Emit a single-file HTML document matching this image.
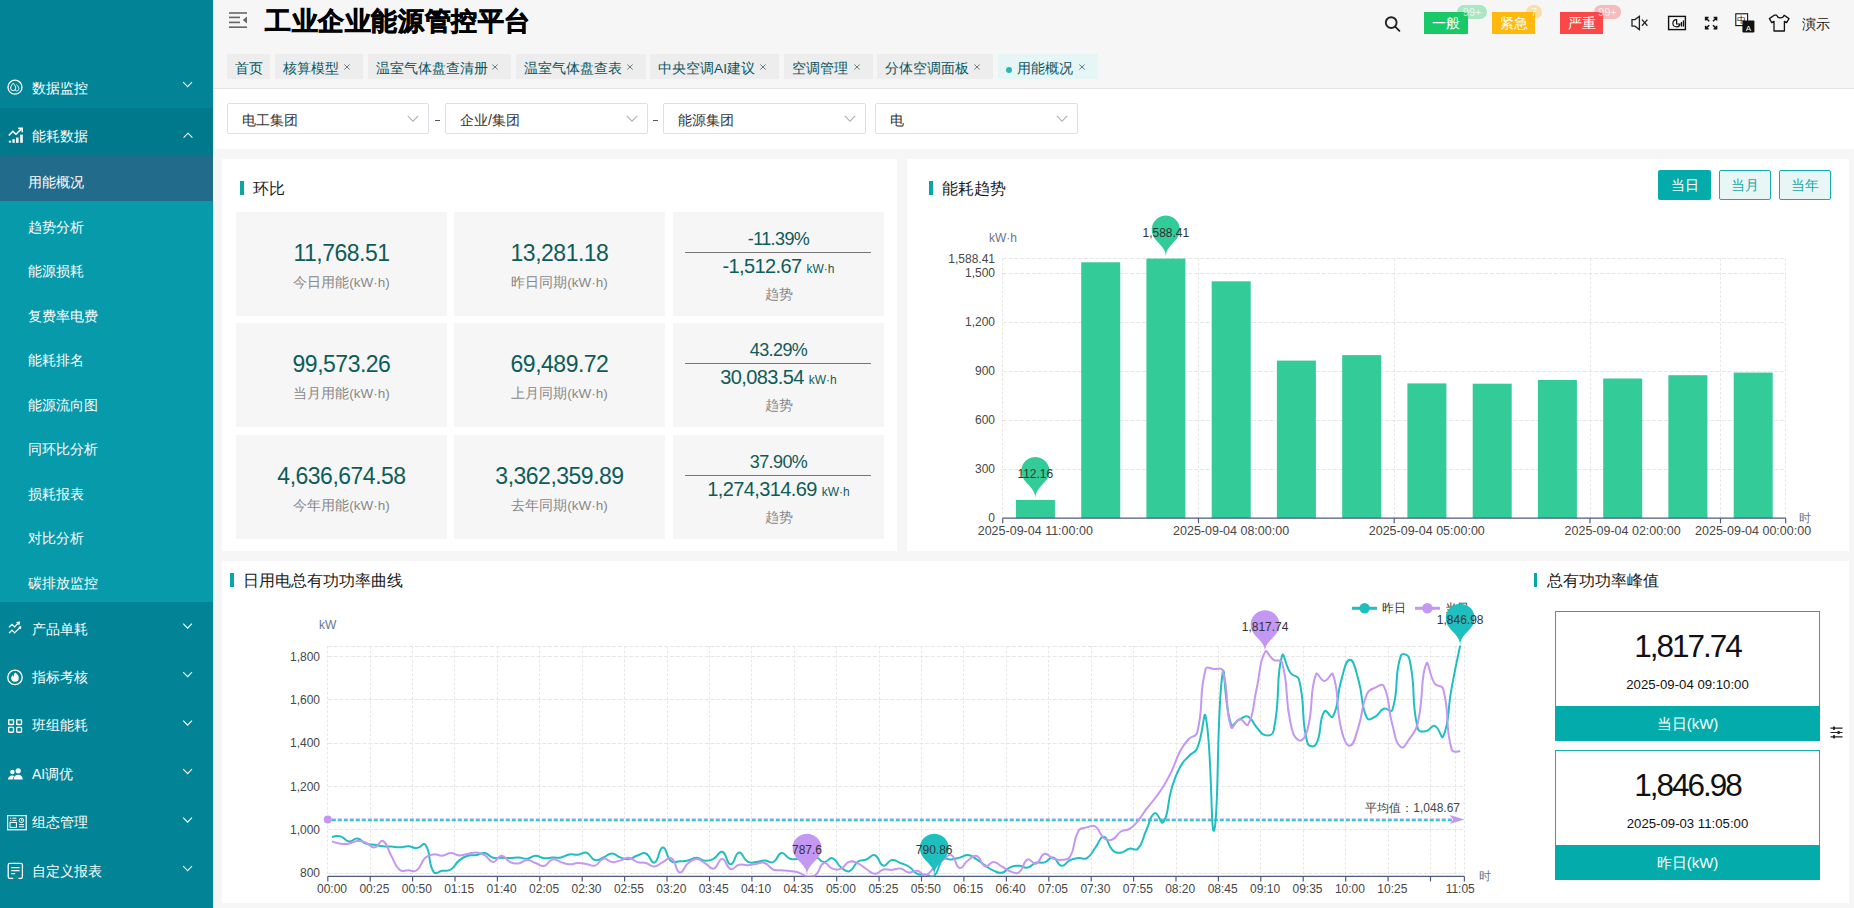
<!DOCTYPE html>
<html><head><meta charset="utf-8">
<style>
*{margin:0;padding:0;box-sizing:border-box}
html,body{width:1854px;height:908px;overflow:hidden;background:#f6f6f6;font-family:"Liberation Sans",sans-serif;}
.a{position:absolute}
#side{left:0;top:0;width:213px;height:908px;background:#028396}
.mi{position:absolute;left:0;width:213px;color:#fff;font-size:14px;}
.mi .t{position:absolute;left:32px;white-space:nowrap;line-height:16px}
.mi .ic{position:absolute;left:7px}
.mi .ch{position:absolute;left:181px}
.si{position:absolute;left:0;width:213px;color:#fff;font-size:14px;}
.si .t{position:absolute;left:28px;white-space:nowrap;line-height:16px}
#hdr{left:213px;top:0;width:1641px;height:89px;background:#f6f6f6;border-bottom:1px solid #e2e2e2}
.tab{position:absolute;top:54px;height:25px;background:#ededed;color:#0b5560;font-size:13.7px;white-space:nowrap}
.tab .t{position:absolute;left:8px;top:7px;line-height:16px}
.tab .x{position:absolute;top:6px;font-size:11px;color:#555}
#flt{left:213px;top:89px;width:1641px;height:60px;background:#fff}
.sel{position:absolute;top:103px;height:31px;width:202px;border:1px solid #dcdfe6;border-radius:2px;background:#fff;font-size:14px;color:#333}
.sel .t{position:absolute;left:14px;top:8px}
.card{position:absolute;background:#fff}
.ttl{position:absolute;font-size:16px;color:#1a1a1a;white-space:nowrap}
.bar{position:absolute;width:4px;height:14px;background:#0aa5a5}
.tile{position:absolute;width:211px;height:104px;background:#f6f6f6;text-align:center}
.num{color:#0e5c5a}
.n1{position:absolute;left:0;width:100%;top:28px;font-size:23px;line-height:26px;letter-spacing:-0.5px}
.lbl{position:absolute;left:0;width:100%;top:63px;font-size:13.5px;line-height:16px;color:#888}
.n2{position:absolute;left:0;width:100%;top:17px;font-size:18px;line-height:20px;letter-spacing:-0.6px}
.hl{position:absolute;left:12px;width:186px;top:40px;height:1px;background:#777}
.n3{position:absolute;left:0;width:100%;top:41.5px;font-size:20px;line-height:24px;letter-spacing:-0.6px}
.n3 .u{font-size:12px;letter-spacing:0}
.l2{top:74px;font-size:14px}
.pk{width:265px;height:130px;border:1px solid #19adad;background:#fff;text-align:center}
.pn{position:absolute;left:0;width:100%;top:17px;font-size:31.5px;line-height:34px;color:#111;letter-spacing:-2px}
.pd{position:absolute;left:0;width:100%;top:64px;font-size:13.2px;line-height:18px;color:#111}
.pb{position:absolute;left:-1px;width:265px;top:94px;height:35px;background:#03acaa;color:#fff;font-size:15px;line-height:35px}
</style></head>
<body>
<div id="side" class="a">
<div class="mi" style="top:60px;height:48px"><span class="t" style="top:20px">数据监控</span></div>
<div class="mi" style="top:108px;height:48px;background:#00798c"><span class="t" style="top:20px">能耗数据</span></div>
<div class="a" style="left:0;top:156px;width:213px;height:446px;background:#069aab"></div>
<div class="a" style="left:0;top:156px;width:213px;height:45px;background:#236b8b"></div>
<div class="si" style="top:174.0px"><span class="t">用能概况</span></div>
<div class="si" style="top:218.6px"><span class="t">趋势分析</span></div>
<div class="si" style="top:263.1px"><span class="t">能源损耗</span></div>
<div class="si" style="top:307.6px"><span class="t">复费率电费</span></div>
<div class="si" style="top:352.2px"><span class="t">能耗排名</span></div>
<div class="si" style="top:396.8px"><span class="t">能源流向图</span></div>
<div class="si" style="top:441.3px"><span class="t">同环比分析</span></div>
<div class="si" style="top:485.8px"><span class="t">损耗报表</span></div>
<div class="si" style="top:530.4px"><span class="t">对比分析</span></div>
<div class="si" style="top:575.0px"><span class="t">碳排放监控</span></div>
<div class="mi" style="top:620.5px"><span class="t">产品单耗</span></div>
<div class="mi" style="top:668.9px"><span class="t">指标考核</span></div>
<div class="mi" style="top:717.3px"><span class="t">班组能耗</span></div>
<div class="mi" style="top:765.7px"><span class="t">AI调优</span></div>
<div class="mi" style="top:814.1px"><span class="t">组态管理</span></div>
<div class="mi" style="top:862.5px"><span class="t">自定义报表</span></div>
</div>
<svg class="a" style="left:0;top:0" width="213" height="908" viewBox="0 0 213 908" fill="none" stroke="#fff" stroke-width="1.2">
<path d="M183.2 82.2L187.6 86.6L192 82.2" stroke-width="1.1"/>
<path d="M183.2 623.7L187.6 628.1L192 623.7" stroke-width="1.1"/>
<path d="M183.2 672.2L187.6 676.6L192 672.2" stroke-width="1.1"/>
<path d="M183.2 720.7L187.6 725.1L192 720.7" stroke-width="1.1"/>
<path d="M183.2 769.2L187.6 773.6L192 769.2" stroke-width="1.1"/>
<path d="M183.2 817.7L187.6 822.1L192 817.7" stroke-width="1.1"/>
<path d="M183.2 866.2L187.6 870.6L192 866.2" stroke-width="1.1"/>
<path d="M183.6 137.6L188 133.2L192.4 137.6" stroke-width="1.1"/>
<circle cx="15" cy="87.2" r="7" stroke-width="1.3"/>
<path d="M13.2 83.2c-1.6 2-2.6 3.4-2.6 4.8a2.6 2.6 0 0 0 5.2 0c0-1.4-1-2.8-2.6-4.8z" stroke-width="1"/><path d="M16.6 84.6c1.4 1.6 2.3 2.8 2.3 4a2.3 2.3 0 0 1-3.6 1.9" stroke-width="1"/>
<path d="M8.8 135.6L12.8 131.4L16 134.2L21.6 128.6" stroke-width="1.5"/><path d="M18.2 128.2H22.2V132.2" stroke-width="1.5"/>
<g fill="#fff" stroke="none"><circle cx="10" cy="141.6" r="1.2"/><rect x="12.4" y="139.2" width="2.4" height="3.6"/><rect x="16" y="137.6" width="2.6" height="5.2"/><rect x="20.2" y="134.6" width="2.6" height="8.2"/></g>
<path d="M9 627.2L12 624.4L14.6 627L18 623.4" stroke-width="1.2"/><path d="M9 633L12 630.2L14.6 632.8L19.6 627.8" stroke-width="1.2"/><path d="M16.4 622.6L19.6 621.8L19 625" fill="#fff" stroke-width="0.8"/><path d="M18.6 627.2L21 626.6L20.4 629.2" fill="#fff" stroke-width="0.8"/>
<circle cx="15" cy="677.4" r="7.2" stroke-width="1.3"/>
<path d="M15.2 672.6c2.6 2 3.6 3.6 3.6 5.4a3.8 3.8 0 0 1-7.6 0c0-1.2.6-2.2 1.4-3 .2 1 .6 1.6 1.2 1.8-.2-1.8.4-3.2 1.4-4.2z" fill="#fff" stroke="none"/>
<g stroke-width="1.4"><rect x="8.7" y="719.7" width="4.8" height="4.8" rx=".6"/><rect x="16.7" y="719.7" width="4.8" height="4.8" rx=".6"/><rect x="8.7" y="727.4" width="4.8" height="4.8" rx=".6"/><rect x="16.7" y="727.4" width="4.8" height="4.8" rx=".6"/></g>
<g fill="#fff" stroke="none"><circle cx="18.2" cy="770.8" r="2.6"/><path d="M13.6 779.6c0-3 2-4.8 4.6-4.8s4.6 1.8 4.6 4.8z"/><circle cx="12.4" cy="772" r="2.2"/><path d="M8 779.6c0-2.6 1.8-4.2 4.2-4.2 1 0 1.6.2 2.2.6-1 .9-1.6 2.1-1.6 3.6z"/></g>
<rect x="7.6" y="815.6" width="18.6" height="14.2" stroke-width="1.2"/>
<g stroke-width="1"><path d="M10 818.2h1.2M12.4 818.2h4M10 820.4h1.2M12.4 820.4h4"/><rect x="10" y="822.4" width="6.4" height="5"/><circle cx="21.4" cy="820.4" r="2.2"/><path d="M21.4 819.2v1.4h1M19 824.6h5M19 826.8h5"/></g>
<path d="M9.8 863.4h11a1.6 1.6 0 0 1 1.6 1.6v11.8a1.6 1.6 0 0 1-1.6 1.6h-2.4M13.2 878.4H9.8a1.6 1.6 0 0 1-1.6-1.6V865a1.6 1.6 0 0 1 1.6-1.6" stroke-width="1.3"/><path d="M11.2 867.6h8.4M11.2 870.6h8.4M11.2 873.6h4" stroke-width="1.3"/>
</svg>
<div id="hdr" class="a"></div>
<svg class="a" style="left:213px;top:0" width="1641" height="89" viewBox="213 0 1641 89"><g fill="#666"><rect x="229" y="12.2" width="18" height="1.6"/><rect x="229" y="16.6" width="11" height="1.6"/><rect x="229" y="21.6" width="11" height="1.6"/><rect x="229" y="26.4" width="18" height="1.6"/><path d="M247 16.4v7.2l-4.2-3.6z"/></g><g fill="none" stroke="#222" stroke-width="1.9"><circle cx="1391.2" cy="22.6" r="5.4"/><path d="M1395.2 26.6l4.2 4.2" stroke-linecap="round"/></g><g fill="none" stroke="#222" stroke-width="1.3"><path d="M1632 19.6h3l4.4-3.4v13.4l-4.4-3.4h-3z"/><path d="M1642 19.6l5.4 6.2M1647.4 19.6l-5.4 6.2"/></g><g fill="none" stroke="#111" stroke-width="1.4"><rect x="1668.6" y="16.4" width="16.8" height="13.2"/><path d="M1676.6 19.6a3.6 3.6 0 1 0 3.4 4.4h-3.4z" stroke-width="1.2"/></g><g fill="#111"><rect x="1680.8" y="22" width="1.3" height="4.6"/><rect x="1682.8" y="20.4" width="1.3" height="6.2"/></g><g fill="none" stroke="#111" stroke-width="1.5"><path d="M1705.6 20.6v-3h3M1716.6 20.6v-3h-3M1705.6 25.8v3h3M1716.6 25.8v3h-3M1706 18l3.2 3.2M1716.2 18l-3.2 3.2M1706 28.4l3.2-3.2M1716.2 28.4l-3.2-3.2"/></g><rect x="1735.8" y="13.8" width="11.8" height="11.8" fill="#fff" stroke="#111" stroke-width="1.1"/><text x="1741.7" y="23.4" font-size="9" text-anchor="middle" fill="#111" font-family="Liberation Sans,sans-serif">中</text><rect x="1742.4" y="20.4" width="12" height="12" fill="#111" rx="1"/><text x="1748.4" y="30.6" font-size="8" text-anchor="middle" fill="#fff" font-family="Liberation Sans,sans-serif">A</text><path d="M1774.2 15.2l-4.8 3.4 2.4 4 2.2-1.2v9.6h10.4v-9.6l2.2 1.2 2.4-4-4.8-3.4c-.6 1.6-2 2.6-3.8 2.6s-3.2-1-3.8-2.6z" fill="none" stroke="#111" stroke-width="1.3" stroke-linejoin="round"/></svg>
<div class="a" style="left:265px;top:4px;font-size:26px;font-weight:900;color:#000;-webkit-text-stroke:0.7px #000;white-space:nowrap;line-height:34px;letter-spacing:0.6px">工业企业能源管控平台</div>
<div class="a" style="left:1802px;top:14px;font-size:14px;color:#111;line-height:20px">演示</div>
<div class="a" style="left:1424px;top:12px;width:44px;height:22px;background:#19c968;color:#fff;font-size:14px;line-height:22px;text-align:center">一般</div><div class="a" style="left:1457.4px;top:5.4px;width:29.59999999999991px;height:14px;border-radius:7px;background:rgba(25,201,104,.35);color:rgba(255,255,255,.75);font-size:11px;line-height:14px;text-align:center">99+</div>
<div class="a" style="left:1492px;top:12px;width:43px;height:22px;background:#ffb80d;color:#fff;font-size:14px;line-height:22px;text-align:center">紧急</div><div class="a" style="left:1525.7px;top:5.4px;width:16.59999999999991px;height:14px;border-radius:7px;background:rgba(255,184,13,.35);color:rgba(255,255,255,.75);font-size:11px;line-height:14px;text-align:center">7</div>
<div class="a" style="left:1560px;top:12px;width:43px;height:22px;background:#fa4848;color:#fff;font-size:14px;line-height:22px;text-align:center">严重</div><div class="a" style="left:1593.8px;top:5.4px;width:27.200000000000045px;height:14px;border-radius:7px;background:rgba(250,72,72,.35);color:rgba(255,255,255,.75);font-size:11px;line-height:14px;text-align:center">99+</div>
<div class="tab" style="left:227px;width:43px;background:#ededed"><span class="t">首页</span></div>
<div class="tab" style="left:275px;width:88px;background:#ededed"><span class="t">核算模型</span><svg class="a" style="left:68.3px;top:9px" width="8" height="8" viewBox="0 0 8 8"><path d="M1.3 1.5L6.7 6.5M6.7 1.5L1.3 6.5" stroke="#5a7075" stroke-width="0.9"/></svg></div>
<div class="tab" style="left:368px;width:143px;background:#ededed"><span class="t">温室气体盘查清册</span><svg class="a" style="left:123.3px;top:9px" width="8" height="8" viewBox="0 0 8 8"><path d="M1.3 1.5L6.7 6.5M6.7 1.5L1.3 6.5" stroke="#5a7075" stroke-width="0.9"/></svg></div>
<div class="tab" style="left:516px;width:130px;background:#ededed"><span class="t">温室气体盘查表</span><svg class="a" style="left:110.3px;top:9px" width="8" height="8" viewBox="0 0 8 8"><path d="M1.3 1.5L6.7 6.5M6.7 1.5L1.3 6.5" stroke="#5a7075" stroke-width="0.9"/></svg></div>
<div class="tab" style="left:650px;width:129px;background:#ededed"><span class="t">中央空调AI建议</span><svg class="a" style="left:109.3px;top:9px" width="8" height="8" viewBox="0 0 8 8"><path d="M1.3 1.5L6.7 6.5M6.7 1.5L1.3 6.5" stroke="#5a7075" stroke-width="0.9"/></svg></div>
<div class="tab" style="left:784px;width:88.5px;background:#ededed"><span class="t">空调管理</span><svg class="a" style="left:68.8px;top:9px" width="8" height="8" viewBox="0 0 8 8"><path d="M1.3 1.5L6.7 6.5M6.7 1.5L1.3 6.5" stroke="#5a7075" stroke-width="0.9"/></svg></div>
<div class="tab" style="left:877px;width:116px;background:#ededed"><span class="t">分体空调面板</span><svg class="a" style="left:96.3px;top:9px" width="8" height="8" viewBox="0 0 8 8"><path d="M1.3 1.5L6.7 6.5M6.7 1.5L1.3 6.5" stroke="#5a7075" stroke-width="0.9"/></svg></div>
<div class="tab" style="left:998px;width:100px;background:#e6f6f6"><span class="a" style="left:8px;top:13px;width:6px;height:6px;border-radius:3px;background:#2fb5b5"></span><span class="t" style="left:19px">用能概况</span><svg class="a" style="left:80.3px;top:9px" width="8" height="8" viewBox="0 0 8 8"><path d="M1.3 1.5L6.7 6.5M6.7 1.5L1.3 6.5" stroke="#5a7075" stroke-width="0.9"/></svg></div>
<div id="flt" class="a"></div>
<div class="sel" style="left:227px;width:202px"><span class="t">电工集团</span><svg class="a" style="left:179px;top:11px" width="12" height="8" viewBox="0 0 12 8"><path d="M0.8 0.8L6 6.2L11.2 0.8" fill="none" stroke="#b0b0b0" stroke-width="1.1"/></svg></div>
<div class="sel" style="left:445px;width:203px"><span class="t">企业/集团</span><svg class="a" style="left:180px;top:11px" width="12" height="8" viewBox="0 0 12 8"><path d="M0.8 0.8L6 6.2L11.2 0.8" fill="none" stroke="#b0b0b0" stroke-width="1.1"/></svg></div>
<div class="sel" style="left:663px;width:203px"><span class="t">能源集团</span><svg class="a" style="left:180px;top:11px" width="12" height="8" viewBox="0 0 12 8"><path d="M0.8 0.8L6 6.2L11.2 0.8" fill="none" stroke="#b0b0b0" stroke-width="1.1"/></svg></div>
<div class="sel" style="left:875px;width:203px"><span class="t">电</span><svg class="a" style="left:180px;top:11px" width="12" height="8" viewBox="0 0 12 8"><path d="M0.8 0.8L6 6.2L11.2 0.8" fill="none" stroke="#b0b0b0" stroke-width="1.1"/></svg></div>
<div class="a" style="left:435px;top:119.6px;width:4.6px;height:1.1px;background:#555"></div>
<div class="a" style="left:653px;top:119.6px;width:4.6px;height:1.1px;background:#555"></div>
<div class="card" style="left:222px;top:159px;width:675px;height:392px"></div>
<div class="card" style="left:907px;top:159px;width:942px;height:392px"></div>
<div class="bar" style="left:240px;top:181px"></div><div class="ttl" style="left:253px;top:179px;line-height:20px">环比</div>
<div class="tile" style="left:236px;top:212px"><div class="num n1">11,768.51</div><div class="lbl">今日用能(kW·h)</div></div>
<div class="tile" style="left:454px;top:212px"><div class="num n1">13,281.18</div><div class="lbl">昨日同期(kW·h)</div></div>
<div class="tile" style="left:673px;top:212px"><div class="num n2">-11.39%</div><div class="hl"></div><div class="num n3">-1,512.67 <span class="u">kW·h</span></div><div class="lbl l2">趋势</div></div>
<div class="tile" style="left:236px;top:323px"><div class="num n1">99,573.26</div><div class="lbl">当月用能(kW·h)</div></div>
<div class="tile" style="left:454px;top:323px"><div class="num n1">69,489.72</div><div class="lbl">上月同期(kW·h)</div></div>
<div class="tile" style="left:673px;top:323px"><div class="num n2">43.29%</div><div class="hl"></div><div class="num n3">30,083.54 <span class="u">kW·h</span></div><div class="lbl l2">趋势</div></div>
<div class="tile" style="left:236px;top:435px"><div class="num n1">4,636,674.58</div><div class="lbl">今年用能(kW·h)</div></div>
<div class="tile" style="left:454px;top:435px"><div class="num n1">3,362,359.89</div><div class="lbl">去年同期(kW·h)</div></div>
<div class="tile" style="left:673px;top:435px"><div class="num n2">37.90%</div><div class="hl"></div><div class="num n3">1,274,314.69 <span class="u">kW·h</span></div><div class="lbl l2">趋势</div></div>
<div class="bar" style="left:929px;top:181px"></div><div class="ttl" style="left:942px;top:179px;line-height:20px">能耗趋势</div>
<div class="a" style="left:1658px;top:170px;width:53px;height:30px;background:#03acaa;border-radius:2px;color:#fff;font-size:14px;line-height:30px;text-align:center">当日</div>
<div class="a" style="left:1719px;top:170px;width:52px;height:30px;background:#e8f6f6;border:1px solid #14adad;border-radius:2px;color:#18a8a8;font-size:14px;line-height:28px;text-align:center">当月</div>
<div class="a" style="left:1779px;top:170px;width:52px;height:30px;background:#e8f6f6;border:1px solid #14adad;border-radius:2px;color:#18a8a8;font-size:14px;line-height:28px;text-align:center">当年</div>
<svg class="a" style="left:907px;top:159px" width="942" height="392" viewBox="907 159 942 392" font-family="Liberation Sans,sans-serif">
<path d="M1002.7 469.5H1785.7" stroke="#e6e6e6" stroke-width="1" stroke-dasharray="4 1.8"/>
<path d="M1002.7 420.5H1785.7" stroke="#e6e6e6" stroke-width="1" stroke-dasharray="4 1.8"/>
<path d="M1002.7 371.5H1785.7" stroke="#e6e6e6" stroke-width="1" stroke-dasharray="4 1.8"/>
<path d="M1002.7 322.5H1785.7" stroke="#e6e6e6" stroke-width="1" stroke-dasharray="4 1.8"/>
<path d="M1002.7 273.5H1785.7" stroke="#e6e6e6" stroke-width="1" stroke-dasharray="4 1.8"/>
<path d="M1002.7 258.5H1785.7" stroke="#e6e6e6" stroke-width="1" stroke-dasharray="4 1.8"/>
<path d="M1002.5 258.6V518.2" stroke="#e6e6e6" stroke-width="1" stroke-dasharray="2.6 2"/>
<path d="M1198.5 258.6V518.2" stroke="#e6e6e6" stroke-width="1" stroke-dasharray="2.6 2"/>
<path d="M1394.5 258.6V518.2" stroke="#e6e6e6" stroke-width="1" stroke-dasharray="2.6 2"/>
<path d="M1590.5 258.6V518.2" stroke="#e6e6e6" stroke-width="1" stroke-dasharray="2.6 2"/>
<path d="M1720.5 258.6V518.2" stroke="#e6e6e6" stroke-width="1" stroke-dasharray="2.6 2"/>
<path d="M1785.5 258.6V518.2" stroke="#e6e6e6" stroke-width="1" stroke-dasharray="2.6 2"/>
<rect x="1015.9" y="499.9" width="39" height="18.3" fill="#33cb98"/>
<rect x="1081.2" y="262.3" width="39" height="255.9" fill="#33cb98"/>
<rect x="1146.4" y="258.6" width="39" height="259.6" fill="#33cb98"/>
<rect x="1211.7" y="281.3" width="39" height="236.9" fill="#33cb98"/>
<rect x="1276.9" y="360.6" width="39" height="157.6" fill="#33cb98"/>
<rect x="1342.2" y="355.1" width="39" height="163.1" fill="#33cb98"/>
<rect x="1407.4" y="383.4" width="39" height="134.8" fill="#33cb98"/>
<rect x="1472.7" y="383.7" width="39" height="134.5" fill="#33cb98"/>
<rect x="1537.9" y="380.0" width="39" height="138.2" fill="#33cb98"/>
<rect x="1603.2" y="378.5" width="39" height="139.7" fill="#33cb98"/>
<rect x="1668.4" y="375.2" width="39" height="143.0" fill="#33cb98"/>
<rect x="1733.7" y="372.6" width="39" height="145.6" fill="#33cb98"/>
<path d="M1002.7 518.2H1785.7" stroke="#4e5a80" stroke-width="1.2"/>
<path d="M1002.7 518.2V523.2" stroke="#4e5a80" stroke-width="1.2"/>
<path d="M1198.5 518.2V523.2" stroke="#4e5a80" stroke-width="1.2"/>
<path d="M1394.2 518.2V523.2" stroke="#4e5a80" stroke-width="1.2"/>
<path d="M1590.0 518.2V523.2" stroke="#4e5a80" stroke-width="1.2"/>
<path d="M1720.5 518.2V523.2" stroke="#4e5a80" stroke-width="1.2"/>
<path d="M1785.7 518.2V523.2" stroke="#4e5a80" stroke-width="1.2"/>
<text x="995" y="522.4" font-size="12" fill="#464646" text-anchor="end">0</text>
<text x="995" y="473.4" font-size="12" fill="#464646" text-anchor="end">300</text>
<text x="995" y="424.3" font-size="12" fill="#464646" text-anchor="end">600</text>
<text x="995" y="375.3" font-size="12" fill="#464646" text-anchor="end">900</text>
<text x="995" y="326.3" font-size="12" fill="#464646" text-anchor="end">1,200</text>
<text x="995" y="277.2" font-size="12" fill="#464646" text-anchor="end">1,500</text>
<text x="995" y="262.8" font-size="12" fill="#464646" text-anchor="end">1,588.41</text>
<text x="989" y="242" font-size="12" fill="#6a7590">kW·h</text>
<text x="1799" y="521.5" font-size="12" fill="#6a7590">时</text>
<text x="1035.3" y="535" font-size="12.5" fill="#464646" text-anchor="middle">2025-09-04 11:00:00</text>
<text x="1231.1" y="535" font-size="12.5" fill="#464646" text-anchor="middle">2025-09-04 08:00:00</text>
<text x="1426.8" y="535" font-size="12.5" fill="#464646" text-anchor="middle">2025-09-04 05:00:00</text>
<text x="1622.6" y="535" font-size="12.5" fill="#464646" text-anchor="middle">2025-09-04 02:00:00</text>
<text x="1753.1" y="535" font-size="12.5" fill="#464646" text-anchor="middle">2025-09-04 00:00:00</text>
<path d="M1022.59 477.19A14.10 14.10 0 1 1 1048.06 477.19C1044.44 484.83 1035.33 488.13 1035.33 498.00C1035.33 488.13 1026.21 484.83 1022.59 477.19Z" fill="#33cb98"/><text x="1035.325" y="478" font-size="12" fill="#333" text-anchor="middle">112.16</text>
<path d="M1153.09 235.69A14.10 14.10 0 1 1 1178.56 235.69C1174.94 243.33 1165.83 246.63 1165.83 256.50C1165.83 246.63 1156.71 243.33 1153.09 235.69Z" fill="#33cb98"/><text x="1165.825" y="236.5" font-size="12" fill="#333" text-anchor="middle">1,588.41</text>
</svg>
<div class="card" style="left:222px;top:561px;width:1627px;height:342px"></div>
<div class="bar" style="left:230px;top:573px"></div><div class="ttl" style="left:243px;top:571px;line-height:20px;font-size:15.7px">日用电总有功功率曲线</div>
<div class="bar" style="left:1534px;top:573px;width:3px"></div><div class="ttl" style="left:1547px;top:571px;line-height:20px">总有功功率峰值</div>
<div class="a pk" style="left:1555px;top:611px"><div class="pn">1,817.74</div><div class="pd">2025-09-04 09:10:00</div><div class="pb">当日(kW)</div></div>
<div class="a pk" style="left:1555px;top:750px"><div class="pn">1,846.98</div><div class="pd">2025-09-03 11:05:00</div><div class="pb">昨日(kW)</div></div>
<svg class="a" style="left:1830px;top:726px" width="13" height="13" viewBox="0 0 13 13"><g stroke="#222" stroke-width="1.2"><path d="M0.5 2.2H12.5M0.5 6.5H12.5M0.5 10.8H12.5"/></g><g fill="#222"><rect x="3" y="0.6" width="2" height="3.2"/><rect x="7.6" y="4.9" width="2" height="3.2"/><rect x="3" y="9.2" width="2" height="3.2"/></g></svg>
<!--LINE--><svg class="a" style="left:222px;top:561px" width="1627" height="342" viewBox="222 561 1627 342" font-family="Liberation Sans,sans-serif">
<path d="M327.75 873.5H1464.4" stroke="#e6e6e6" stroke-width="1" stroke-dasharray="4 1.8"/>
<path d="M327.75 829.5H1464.4" stroke="#e6e6e6" stroke-width="1" stroke-dasharray="4 1.8"/>
<path d="M327.75 786.5H1464.4" stroke="#e6e6e6" stroke-width="1" stroke-dasharray="4 1.8"/>
<path d="M327.75 743.5H1464.4" stroke="#e6e6e6" stroke-width="1" stroke-dasharray="4 1.8"/>
<path d="M327.75 699.5H1464.4" stroke="#e6e6e6" stroke-width="1" stroke-dasharray="4 1.8"/>
<path d="M327.75 656.5H1464.4" stroke="#e6e6e6" stroke-width="1" stroke-dasharray="4 1.8"/>
<path d="M327.75 646.5H1464.4" stroke="#e6e6e6" stroke-width="1" stroke-dasharray="4 1.8"/>
<path d="M327.5 646.0V876.4" stroke="#e6e6e6" stroke-width="1" stroke-dasharray="2.6 2"/>
<path d="M370.5 646.0V876.4" stroke="#e6e6e6" stroke-width="1" stroke-dasharray="2.6 2"/>
<path d="M412.5 646.0V876.4" stroke="#e6e6e6" stroke-width="1" stroke-dasharray="2.6 2"/>
<path d="M454.5 646.0V876.4" stroke="#e6e6e6" stroke-width="1" stroke-dasharray="2.6 2"/>
<path d="M497.5 646.0V876.4" stroke="#e6e6e6" stroke-width="1" stroke-dasharray="2.6 2"/>
<path d="M539.5 646.0V876.4" stroke="#e6e6e6" stroke-width="1" stroke-dasharray="2.6 2"/>
<path d="M582.5 646.0V876.4" stroke="#e6e6e6" stroke-width="1" stroke-dasharray="2.6 2"/>
<path d="M624.5 646.0V876.4" stroke="#e6e6e6" stroke-width="1" stroke-dasharray="2.6 2"/>
<path d="M667.5 646.0V876.4" stroke="#e6e6e6" stroke-width="1" stroke-dasharray="2.6 2"/>
<path d="M709.5 646.0V876.4" stroke="#e6e6e6" stroke-width="1" stroke-dasharray="2.6 2"/>
<path d="M751.5 646.0V876.4" stroke="#e6e6e6" stroke-width="1" stroke-dasharray="2.6 2"/>
<path d="M794.5 646.0V876.4" stroke="#e6e6e6" stroke-width="1" stroke-dasharray="2.6 2"/>
<path d="M836.5 646.0V876.4" stroke="#e6e6e6" stroke-width="1" stroke-dasharray="2.6 2"/>
<path d="M879.5 646.0V876.4" stroke="#e6e6e6" stroke-width="1" stroke-dasharray="2.6 2"/>
<path d="M921.5 646.0V876.4" stroke="#e6e6e6" stroke-width="1" stroke-dasharray="2.6 2"/>
<path d="M963.5 646.0V876.4" stroke="#e6e6e6" stroke-width="1" stroke-dasharray="2.6 2"/>
<path d="M1006.5 646.0V876.4" stroke="#e6e6e6" stroke-width="1" stroke-dasharray="2.6 2"/>
<path d="M1048.5 646.0V876.4" stroke="#e6e6e6" stroke-width="1" stroke-dasharray="2.6 2"/>
<path d="M1091.5 646.0V876.4" stroke="#e6e6e6" stroke-width="1" stroke-dasharray="2.6 2"/>
<path d="M1133.5 646.0V876.4" stroke="#e6e6e6" stroke-width="1" stroke-dasharray="2.6 2"/>
<path d="M1176.5 646.0V876.4" stroke="#e6e6e6" stroke-width="1" stroke-dasharray="2.6 2"/>
<path d="M1218.5 646.0V876.4" stroke="#e6e6e6" stroke-width="1" stroke-dasharray="2.6 2"/>
<path d="M1260.5 646.0V876.4" stroke="#e6e6e6" stroke-width="1" stroke-dasharray="2.6 2"/>
<path d="M1303.5 646.0V876.4" stroke="#e6e6e6" stroke-width="1" stroke-dasharray="2.6 2"/>
<path d="M1345.5 646.0V876.4" stroke="#e6e6e6" stroke-width="1" stroke-dasharray="2.6 2"/>
<path d="M1388.5 646.0V876.4" stroke="#e6e6e6" stroke-width="1" stroke-dasharray="2.6 2"/>
<path d="M1430.5 646.0V876.4" stroke="#e6e6e6" stroke-width="1" stroke-dasharray="2.6 2"/>
<path d="M1464.5 646.0V876.4" stroke="#e6e6e6" stroke-width="1" stroke-dasharray="2.6 2"/>
<path d="M1455.5 646.0V876.4" stroke="#e6e6e6" stroke-width="1" stroke-dasharray="2.6 2"/>
<text x="320" y="877.3" font-size="12" fill="#464646" text-anchor="end">800</text>
<text x="320" y="834.0" font-size="12" fill="#464646" text-anchor="end">1,000</text>
<text x="320" y="790.6" font-size="12" fill="#464646" text-anchor="end">1,200</text>
<text x="320" y="747.3" font-size="12" fill="#464646" text-anchor="end">1,400</text>
<text x="320" y="703.9" font-size="12" fill="#464646" text-anchor="end">1,600</text>
<text x="320" y="660.6" font-size="12" fill="#464646" text-anchor="end">1,800</text>
<text x="319" y="628.5" font-size="12" fill="#6a7590">kW</text>
<text x="332.0" y="893" font-size="12" fill="#464646" text-anchor="middle">00:00</text>
<text x="374.4" y="893" font-size="12" fill="#464646" text-anchor="middle">00:25</text>
<text x="416.8" y="893" font-size="12" fill="#464646" text-anchor="middle">00:50</text>
<text x="459.2" y="893" font-size="12" fill="#464646" text-anchor="middle">01:15</text>
<text x="501.6" y="893" font-size="12" fill="#464646" text-anchor="middle">01:40</text>
<text x="544.1" y="893" font-size="12" fill="#464646" text-anchor="middle">02:05</text>
<text x="586.5" y="893" font-size="12" fill="#464646" text-anchor="middle">02:30</text>
<text x="628.9" y="893" font-size="12" fill="#464646" text-anchor="middle">02:55</text>
<text x="671.3" y="893" font-size="12" fill="#464646" text-anchor="middle">03:20</text>
<text x="713.7" y="893" font-size="12" fill="#464646" text-anchor="middle">03:45</text>
<text x="756.1" y="893" font-size="12" fill="#464646" text-anchor="middle">04:10</text>
<text x="798.5" y="893" font-size="12" fill="#464646" text-anchor="middle">04:35</text>
<text x="840.9" y="893" font-size="12" fill="#464646" text-anchor="middle">05:00</text>
<text x="883.4" y="893" font-size="12" fill="#464646" text-anchor="middle">05:25</text>
<text x="925.8" y="893" font-size="12" fill="#464646" text-anchor="middle">05:50</text>
<text x="968.2" y="893" font-size="12" fill="#464646" text-anchor="middle">06:15</text>
<text x="1010.6" y="893" font-size="12" fill="#464646" text-anchor="middle">06:40</text>
<text x="1053.0" y="893" font-size="12" fill="#464646" text-anchor="middle">07:05</text>
<text x="1095.4" y="893" font-size="12" fill="#464646" text-anchor="middle">07:30</text>
<text x="1137.8" y="893" font-size="12" fill="#464646" text-anchor="middle">07:55</text>
<text x="1180.2" y="893" font-size="12" fill="#464646" text-anchor="middle">08:20</text>
<text x="1222.7" y="893" font-size="12" fill="#464646" text-anchor="middle">08:45</text>
<text x="1265.1" y="893" font-size="12" fill="#464646" text-anchor="middle">09:10</text>
<text x="1307.5" y="893" font-size="12" fill="#464646" text-anchor="middle">09:35</text>
<text x="1349.9" y="893" font-size="12" fill="#464646" text-anchor="middle">10:00</text>
<text x="1392.3" y="893" font-size="12" fill="#464646" text-anchor="middle">10:25</text>
<text x="1460.2" y="893" font-size="12" fill="#464646" text-anchor="middle">11:05</text>
<text x="1479" y="880" font-size="12" fill="#6a7590">时</text>
<path d="M327.75 876.4H1464.4" stroke="#4e5a80" stroke-width="1.2"/>
<path d="M327.8 876.4V881.4" stroke="#4e5a80" stroke-width="1.2"/>
<path d="M370.2 876.4V881.4" stroke="#4e5a80" stroke-width="1.2"/>
<path d="M412.6 876.4V881.4" stroke="#4e5a80" stroke-width="1.2"/>
<path d="M455.0 876.4V881.4" stroke="#4e5a80" stroke-width="1.2"/>
<path d="M497.4 876.4V881.4" stroke="#4e5a80" stroke-width="1.2"/>
<path d="M539.8 876.4V881.4" stroke="#4e5a80" stroke-width="1.2"/>
<path d="M582.2 876.4V881.4" stroke="#4e5a80" stroke-width="1.2"/>
<path d="M624.6 876.4V881.4" stroke="#4e5a80" stroke-width="1.2"/>
<path d="M667.0 876.4V881.4" stroke="#4e5a80" stroke-width="1.2"/>
<path d="M709.5 876.4V881.4" stroke="#4e5a80" stroke-width="1.2"/>
<path d="M751.9 876.4V881.4" stroke="#4e5a80" stroke-width="1.2"/>
<path d="M794.3 876.4V881.4" stroke="#4e5a80" stroke-width="1.2"/>
<path d="M836.7 876.4V881.4" stroke="#4e5a80" stroke-width="1.2"/>
<path d="M879.1 876.4V881.4" stroke="#4e5a80" stroke-width="1.2"/>
<path d="M921.5 876.4V881.4" stroke="#4e5a80" stroke-width="1.2"/>
<path d="M963.9 876.4V881.4" stroke="#4e5a80" stroke-width="1.2"/>
<path d="M1006.4 876.4V881.4" stroke="#4e5a80" stroke-width="1.2"/>
<path d="M1048.8 876.4V881.4" stroke="#4e5a80" stroke-width="1.2"/>
<path d="M1091.2 876.4V881.4" stroke="#4e5a80" stroke-width="1.2"/>
<path d="M1133.6 876.4V881.4" stroke="#4e5a80" stroke-width="1.2"/>
<path d="M1176.0 876.4V881.4" stroke="#4e5a80" stroke-width="1.2"/>
<path d="M1218.4 876.4V881.4" stroke="#4e5a80" stroke-width="1.2"/>
<path d="M1260.8 876.4V881.4" stroke="#4e5a80" stroke-width="1.2"/>
<path d="M1303.2 876.4V881.4" stroke="#4e5a80" stroke-width="1.2"/>
<path d="M1345.7 876.4V881.4" stroke="#4e5a80" stroke-width="1.2"/>
<path d="M1388.1 876.4V881.4" stroke="#4e5a80" stroke-width="1.2"/>
<path d="M1430.5 876.4V881.4" stroke="#4e5a80" stroke-width="1.2"/>
<path d="M1464.4 876.4V881.4" stroke="#4e5a80" stroke-width="1.2"/>
<path d="M331.8 820.5H1454.4" stroke="#2cc4c8" stroke-width="1.6" stroke-dasharray="4 2"/>
<path d="M331.8 819.2H1454.4" stroke="#9a9ef0" stroke-width="1.5" stroke-dasharray="4 2"/>
<circle cx="327.8" cy="819.6" r="4" fill="#c397f2"/>
<path d="M1464.4 819.6L1449.4 815.1L1453.4 819.6L1449.4 824.1Z" fill="#c397f2"/>
<text x="1460" y="812" font-size="12" fill="#464646" text-anchor="end">平均值：1,048.67</text>
<path d="M1352 608.3H1377" stroke="#1fbfbf" stroke-width="3"/><circle cx="1364.6" cy="608.3" r="5.3" fill="#1fbfbf"/>
<text x="1381.5" y="612.2" font-size="12" fill="#333">昨日</text>
<path d="M1415 608.3H1440" stroke="#c397f2" stroke-width="3"/><circle cx="1427.4" cy="608.3" r="5.3" fill="#c397f2"/>
<text x="1444.5" y="612.2" font-size="12" fill="#333">当日</text>
<clipPath id="gclip"><rect x="327.75" y="616.0" width="1146.7" height="260.4"/></clipPath><g clip-path="url(#gclip)">
<path d="M331.99 837.10C331.99 837.10 336.54 835.40 340.47 836.40C345.02 837.55 344.51 840.82 348.96 841.40C352.99 841.92 353.40 838.08 357.44 838.60C361.89 839.18 361.38 841.97 365.92 843.60C369.86 845.02 370.18 844.05 374.40 844.70C378.66 845.35 378.61 845.72 382.89 846.20C387.10 846.67 387.13 846.33 391.37 846.60C395.61 846.88 395.62 847.40 399.85 847.30C404.10 847.20 404.13 846.00 408.33 846.20C412.61 846.40 412.68 848.47 416.82 848.10C421.16 847.72 423.25 841.80 425.30 844.70C431.73 853.80 427.25 862.06 433.78 872.10C435.73 875.11 438.02 871.45 442.26 870.80C446.50 870.15 447.28 871.62 450.75 869.50C455.77 866.42 454.46 864.28 459.23 860.40C462.94 857.38 463.19 857.11 467.71 855.70C471.67 854.46 472.01 855.77 476.19 855.10C480.49 854.42 480.67 852.36 484.68 853.00C489.15 853.71 488.62 856.52 493.16 857.80C497.11 858.92 497.40 857.75 501.64 857.80C505.88 857.85 505.89 858.10 510.12 858.00C514.37 857.90 514.38 857.23 518.61 857.40C522.87 857.58 522.95 859.11 527.09 858.70C531.43 858.26 531.29 855.83 535.57 855.70C539.78 855.58 539.73 857.72 544.05 858.20C548.21 858.67 548.29 857.80 552.54 857.60C556.77 857.40 556.90 858.18 561.02 857.40C565.38 856.58 565.14 855.07 569.50 854.40C573.62 853.77 573.80 855.19 577.98 854.80C582.28 854.39 582.74 851.66 586.47 852.80C591.22 854.26 590.23 858.72 594.95 860.00C598.71 861.02 599.30 858.98 603.43 857.40C607.78 855.73 607.67 853.50 611.91 853.50C616.15 853.50 615.99 855.95 620.40 857.40C624.48 858.75 624.77 859.56 628.88 859.10C633.25 858.61 633.00 856.94 637.36 855.50C641.48 854.14 642.35 852.04 645.84 853.50C650.83 855.59 650.78 863.85 654.33 862.60C659.26 860.85 658.43 847.84 662.81 847.50C666.91 847.19 665.72 856.77 671.29 861.30C674.21 863.67 675.54 861.52 679.77 861.30C684.03 861.07 684.10 861.26 688.26 860.40C692.58 859.51 692.53 857.70 696.74 857.80C701.01 857.90 700.92 860.57 705.22 860.80C709.40 861.02 709.94 860.70 713.70 858.70C718.42 856.20 718.62 850.62 722.19 851.80C727.11 853.42 726.33 864.10 730.67 864.30C734.82 864.50 734.59 853.30 739.15 852.60C743.08 852.00 742.59 858.88 747.63 861.70C751.07 863.63 751.91 862.42 756.12 862.10C760.40 861.77 760.36 860.40 764.60 860.40C768.84 860.40 769.59 863.60 773.08 862.10C778.07 859.95 776.91 854.03 781.56 853.10C785.39 852.33 785.42 857.07 790.05 858.70C793.91 860.07 794.29 858.90 798.53 859.10C802.77 859.30 802.86 860.01 807.01 859.50C811.34 858.96 811.49 856.39 815.49 857.00C819.97 857.69 819.61 861.79 823.98 862.10C828.09 862.39 828.82 857.09 832.46 858.20C837.30 859.69 836.10 863.59 840.94 867.30C844.58 870.09 845.84 872.38 849.42 871.20C854.32 869.58 852.88 865.17 857.91 861.70C861.36 859.32 862.32 861.06 866.39 859.50C870.80 857.81 871.35 853.94 874.87 855.20C879.84 856.99 878.53 864.23 883.35 865.60C887.01 866.63 887.34 860.69 891.84 860.00C895.82 859.39 896.12 861.39 900.32 863.00C904.60 864.64 904.98 864.07 908.80 866.50C913.46 869.47 912.47 871.47 917.28 873.80C920.95 875.57 921.53 874.23 925.77 874.70C930.01 875.18 931.55 878.12 934.25 875.70C940.03 870.52 936.94 865.07 942.73 859.50C945.42 856.92 947.02 859.87 951.21 859.40C955.50 858.92 955.50 858.66 959.70 857.60C963.98 856.51 964.09 854.67 968.18 855.10C972.57 855.57 972.61 856.94 976.66 859.40C981.09 862.09 980.81 862.54 985.14 865.40C989.29 868.14 989.11 868.66 993.63 870.60C997.59 872.31 998.19 873.51 1002.11 872.70C1006.67 871.76 1005.99 868.97 1010.59 867.10C1014.47 865.52 1014.85 865.68 1019.07 865.80C1023.34 865.93 1023.56 868.31 1027.56 867.60C1032.05 866.81 1031.51 864.19 1036.04 862.80C1039.99 861.59 1040.57 863.61 1044.52 862.40C1049.05 861.01 1049.17 856.83 1053.00 857.60C1057.65 858.53 1056.93 865.10 1061.49 865.80C1065.41 866.40 1065.41 862.27 1069.97 860.20C1073.89 858.42 1074.15 858.63 1078.45 858.10C1082.63 857.58 1083.67 860.14 1086.93 858.10C1092.15 854.84 1091.19 852.81 1095.42 847.50C1099.67 842.16 1099.95 836.22 1103.90 836.80C1108.43 837.47 1106.97 844.93 1112.38 850.00C1115.45 852.88 1116.73 853.02 1120.86 852.70C1125.22 852.37 1124.89 849.75 1129.35 848.70C1133.37 847.75 1135.33 851.42 1137.83 848.70C1143.82 842.17 1141.93 839.39 1146.31 830.20C1150.42 821.59 1149.67 815.49 1154.79 813.10C1158.15 811.54 1161.06 825.58 1163.28 822.30C1169.54 813.03 1166.61 804.86 1171.76 788.00C1175.09 777.11 1174.92 776.77 1180.24 766.80C1183.40 760.87 1184.15 761.19 1188.72 756.20C1192.63 751.94 1194.99 753.47 1197.21 748.30C1203.47 733.67 1203.79 707.44 1205.69 716.60C1212.27 748.39 1210.61 839.35 1214.17 830.20C1219.09 817.55 1216.28 712.69 1222.65 673.00C1224.77 659.84 1224.01 705.06 1231.14 724.50C1232.49 728.21 1235.14 721.38 1239.62 719.30C1243.62 717.43 1244.74 715.04 1248.10 716.60C1253.22 718.99 1252.01 722.21 1256.58 727.20C1260.49 731.46 1260.38 734.02 1265.07 735.10C1268.86 735.97 1272.61 735.47 1273.55 731.10C1281.10 695.87 1275.26 679.10 1282.03 655.90C1283.74 650.05 1285.09 665.42 1290.51 673.00C1293.57 677.27 1297.78 674.57 1299.00 679.60C1306.26 709.57 1300.00 714.44 1307.48 743.00C1308.48 746.84 1314.26 747.59 1315.96 744.40C1322.74 731.74 1317.88 722.05 1324.44 711.30C1326.36 708.15 1331.16 719.91 1332.93 716.60C1339.64 704.06 1336.00 697.72 1341.41 679.60C1344.48 669.32 1345.65 659.80 1349.89 659.80C1354.13 659.80 1355.37 669.30 1358.37 679.60C1363.85 698.35 1359.90 702.72 1366.86 717.90C1368.38 721.22 1371.73 718.56 1375.34 716.60C1380.21 713.96 1378.95 710.60 1383.82 708.70C1387.43 707.30 1391.15 713.58 1392.30 710.00C1399.64 687.18 1393.49 678.06 1400.79 655.90C1401.97 652.31 1408.32 654.44 1409.27 658.50C1416.80 690.74 1410.22 696.26 1417.75 728.50C1418.70 732.56 1422.24 731.71 1426.23 731.10C1430.72 730.41 1431.12 724.78 1434.72 725.90C1439.60 727.43 1441.38 740.50 1443.20 736.40C1449.86 721.35 1447.14 711.94 1451.68 687.60C1455.62 666.49 1460.16 645.50 1460.16 645.50" fill="none" stroke="#1fbfbf" stroke-width="2"/>
<path d="M331.99 841.40C331.99 841.40 336.15 843.24 340.47 843.80C344.63 844.34 344.81 844.28 348.96 843.60C353.29 842.88 353.14 841.23 357.44 841.00C361.63 840.78 361.93 841.17 365.92 842.70C370.41 844.42 370.36 847.91 374.40 847.50C378.84 847.06 379.65 839.36 382.89 841.00C388.13 843.66 386.99 848.63 391.37 856.10C395.47 863.08 394.29 865.24 399.85 869.90C402.77 872.34 404.09 870.20 408.33 870.30C412.57 870.40 413.77 872.55 416.82 870.30C422.25 866.30 420.01 862.75 425.30 857.80C428.50 854.80 429.41 854.94 433.78 854.40C437.89 853.89 438.09 856.02 442.26 855.70C446.58 855.37 446.49 853.18 450.75 853.10C454.97 853.03 454.94 855.20 459.23 855.40C463.43 855.60 463.47 854.63 467.71 853.90C471.95 853.18 472.03 852.18 476.19 852.50C480.51 852.83 480.87 853.05 484.68 855.20C489.35 857.85 488.86 861.97 493.16 862.10C497.34 862.22 497.40 855.70 501.64 855.70C505.88 855.70 505.43 859.97 510.12 862.10C513.91 863.82 514.50 863.91 518.61 863.40C522.98 862.86 522.81 860.10 527.09 860.00C531.30 859.90 531.33 861.50 535.57 863.00C539.81 864.50 540.18 866.80 544.05 866.00C548.66 865.05 547.90 860.57 552.54 859.50C556.38 858.62 556.75 860.89 561.02 862.10C565.23 863.29 565.22 864.07 569.50 864.30C573.70 864.52 573.73 863.10 577.98 863.00C582.21 862.90 582.25 863.25 586.47 863.90C590.74 864.55 591.20 866.75 594.95 865.60C599.68 864.15 598.81 859.65 603.43 858.70C607.29 857.90 607.56 861.66 611.91 862.10C616.04 862.51 616.21 861.46 620.40 860.40C624.69 859.31 624.78 857.39 628.88 857.80C633.27 858.24 632.89 860.73 637.36 862.10C641.37 863.33 641.76 861.94 645.84 863.00C650.24 864.14 650.17 866.72 654.33 866.50C658.65 866.27 658.52 864.20 662.81 862.10C667.00 860.05 668.24 856.33 671.29 858.20C676.72 861.53 674.97 871.14 679.77 872.50C683.45 873.54 683.36 866.87 688.26 863.00C691.84 860.17 692.54 859.00 696.74 859.10C701.02 859.20 701.08 861.08 705.22 863.40C709.56 865.83 709.98 869.54 713.70 868.60C718.47 867.39 717.99 859.00 722.19 859.10C726.48 859.20 725.76 867.38 730.67 869.00C734.25 870.18 734.67 865.70 739.15 864.70C743.15 863.80 743.41 865.40 747.63 865.20C751.90 865.00 751.86 864.45 756.12 863.90C760.34 863.35 760.83 861.76 764.60 863.00C769.32 864.56 768.36 867.47 773.08 869.50C776.84 871.12 777.32 869.92 781.56 870.30C785.80 870.67 785.83 870.45 790.05 871.00C794.31 871.55 794.46 871.20 798.53 872.50C802.94 873.90 802.59 875.72 807.01 876.40C811.07 877.02 812.38 877.56 815.49 875.10C820.86 870.86 818.95 864.93 823.98 863.00C827.43 861.68 827.83 867.07 832.46 868.60C836.32 869.87 837.24 870.11 840.94 868.60C845.72 866.66 844.69 863.15 849.42 861.70C853.17 860.55 854.01 861.72 857.91 863.40C862.49 865.37 862.06 866.35 866.39 869.00C870.54 871.55 870.58 873.67 874.87 873.80C879.06 873.92 878.87 870.53 883.35 869.50C887.36 868.58 887.62 870.12 891.84 869.90C896.10 869.67 896.26 867.98 900.32 868.60C904.74 869.28 904.40 871.93 908.80 872.50C912.88 873.03 913.24 870.18 917.28 870.80C921.73 871.48 921.93 875.89 925.77 875.10C930.41 874.14 929.91 871.09 934.25 867.30C938.39 863.69 938.28 863.50 942.73 860.30C946.76 857.40 947.89 853.59 951.21 855.10C956.37 857.44 954.84 866.54 959.70 868.00C963.32 869.09 963.53 863.51 968.18 860.20C972.01 857.46 973.14 854.64 976.66 855.90C981.63 857.69 980.18 864.51 985.14 866.30C988.66 867.56 989.43 861.90 993.63 862.00C997.91 862.10 997.88 864.33 1002.11 866.70C1006.36 869.08 1006.07 870.01 1010.59 871.50C1014.55 872.81 1016.06 874.45 1019.07 872.30C1024.54 868.40 1022.31 862.06 1027.56 859.40C1030.79 857.76 1032.46 864.88 1036.04 863.70C1040.94 862.08 1039.66 855.29 1044.52 853.80C1048.14 852.69 1048.50 856.91 1053.00 858.50C1056.99 859.91 1057.35 860.21 1061.49 859.80C1065.83 859.36 1067.86 860.39 1069.97 856.80C1076.35 845.94 1072.11 841.90 1078.45 830.90C1080.59 827.20 1082.54 828.54 1086.93 827.40C1091.02 826.34 1092.27 824.50 1095.42 826.50C1100.75 829.90 1098.58 834.12 1103.90 838.20C1107.06 840.62 1108.79 840.92 1112.38 839.50C1117.27 837.57 1116.05 834.51 1120.86 831.50C1124.53 829.21 1125.67 831.18 1129.35 828.90C1134.15 825.93 1134.08 825.38 1137.83 821.00C1142.56 815.48 1141.91 814.93 1146.31 809.10C1150.40 803.68 1150.71 803.92 1154.79 798.50C1159.19 792.67 1159.47 792.82 1163.28 786.60C1167.95 778.97 1167.91 778.89 1171.76 770.80C1176.39 761.09 1175.19 760.44 1180.24 751.00C1183.67 744.59 1183.84 744.43 1188.72 739.10C1192.32 735.18 1195.99 737.53 1197.21 732.50C1204.47 702.53 1198.20 697.09 1205.69 669.10C1206.68 665.39 1209.95 668.78 1214.17 669.10C1218.44 669.43 1221.55 666.62 1222.65 670.40C1230.03 695.67 1224.08 706.86 1231.14 727.20C1232.56 731.31 1235.05 720.03 1239.62 719.30C1243.54 718.68 1246.29 727.75 1248.10 724.50C1254.77 712.55 1252.42 706.72 1256.58 688.90C1260.90 670.42 1258.57 663.05 1265.07 651.90C1267.05 648.50 1268.75 656.80 1273.55 659.80C1277.23 662.10 1280.95 658.48 1282.03 662.50C1289.43 690.08 1284.07 693.42 1290.51 723.00C1292.55 732.37 1294.01 738.40 1299.00 740.40C1302.49 741.80 1305.83 736.24 1307.48 729.80C1314.31 703.19 1308.85 694.76 1315.96 674.30C1317.33 670.36 1320.20 681.00 1324.44 681.00C1328.68 681.00 1331.56 670.36 1332.93 674.30C1340.04 694.76 1334.99 702.77 1341.41 729.80C1343.47 738.47 1345.91 746.31 1349.89 745.70C1354.39 745.01 1355.20 736.83 1358.37 727.20C1363.68 711.08 1360.41 709.25 1366.86 694.20C1368.89 689.45 1370.63 689.82 1375.34 687.60C1379.11 685.82 1382.30 682.88 1383.82 686.20C1390.78 701.33 1387.04 705.65 1392.30 724.50C1395.53 736.05 1395.06 742.07 1400.79 747.00C1403.55 749.37 1405.95 743.76 1409.27 739.10C1414.43 731.86 1415.79 731.90 1417.75 723.20C1424.27 694.25 1419.99 678.37 1426.23 663.80C1428.47 658.57 1428.92 675.03 1434.72 683.60C1437.41 687.58 1442.01 684.27 1443.20 688.90C1450.49 717.27 1444.24 722.37 1451.68 749.60C1452.72 753.42 1460.16 751.00 1460.16 751.00" fill="none" stroke="#c397f2" stroke-width="2"/></g>
<path d="M794.00 854.24A14.40 14.40 0 1 1 820.02 854.24C816.32 862.05 807.01 865.42 807.01 875.50C807.01 865.42 797.70 862.05 794.00 854.24Z" fill="#c397f2"/><text x="807.0" y="854" font-size="12" fill="#333" text-anchor="middle">787.6</text>
<path d="M921.24 854.24A14.40 14.40 0 1 1 947.26 854.24C943.56 862.05 934.25 865.42 934.25 875.50C934.25 865.42 924.94 862.05 921.24 854.24Z" fill="#1fbfbf"/><text x="934.2" y="853.5" font-size="12" fill="#333" text-anchor="middle">790.86</text>
<path d="M1252.06 630.74A14.40 14.40 0 1 1 1278.08 630.74C1274.37 638.55 1265.07 641.92 1265.07 652.00C1265.07 641.92 1255.76 638.55 1252.06 630.74Z" fill="#c397f2"/><text x="1265.1" y="630.5" font-size="12" fill="#333" text-anchor="middle">1,817.74</text>
<path d="M1447.15 624.24A14.40 14.40 0 1 1 1473.17 624.24C1469.47 632.05 1460.16 635.42 1460.16 645.50C1460.16 635.42 1450.86 632.05 1447.15 624.24Z" fill="#1fbfbf"/><text x="1460.2" y="623.5" font-size="12" fill="#333" text-anchor="middle">1,846.98</text>
</svg><!--/LINE-->
</body></html>
